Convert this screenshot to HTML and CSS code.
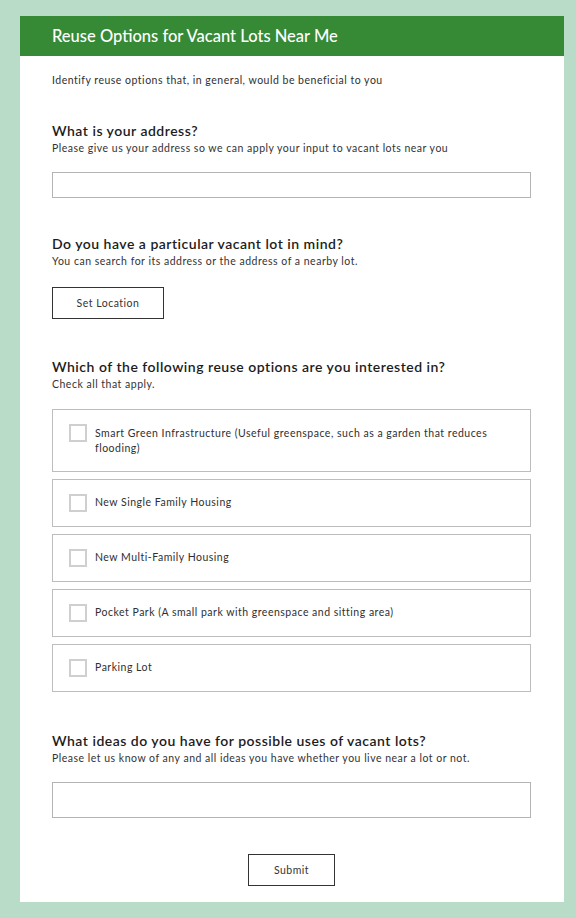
FILE: index.html
```html
<!DOCTYPE html>
<html lang="en">
<head>
<meta charset="utf-8">
<title>Reuse Options for Vacant Lots Near Me</title>
<link rel="stylesheet" href="styles.css">
</head>
<body>
<div class="card">
  <header class="card-header">
    <h1 class="title">Reuse Options for Vacant Lots Near Me</h1>
  </header>
  <form class="card-body">
    <p class="intro">Identify reuse options that, in general, would be beneficial to you</p>

    <section class="question q-address">
      <h2 class="q-title">What is your address?</h2>
      <p class="q-hint">Please give us your address so we can apply your input to vacant lots near you</p>
      <input class="text-input" type="text">
    </section>

    <section class="question q-lot">
      <h2 class="q-title">Do you have a particular vacant lot in mind?</h2>
      <p class="q-hint">You can search for its address or the address of a nearby lot.</p>
      <button class="btn btn-location" type="button">Set Location</button>
    </section>

    <section class="question q-options">
      <h2 class="q-title">Which of the following reuse options are you interested in?</h2>
      <p class="q-hint">Check all that apply.</p>
      <div class="options">
        <label class="option"><span class="box"></span><span class="option-text">Smart Green Infrastructure (Useful greenspace, such as a garden that reduces flooding)</span></label>
        <label class="option"><span class="box"></span><span class="option-text">New Single Family Housing</span></label>
        <label class="option"><span class="box"></span><span class="option-text">New Multi-Family Housing</span></label>
        <label class="option"><span class="box"></span><span class="option-text">Pocket Park (A small park with greenspace and sitting area)</span></label>
        <label class="option"><span class="box"></span><span class="option-text">Parking Lot</span></label>
      </div>
    </section>

    <section class="question q-ideas">
      <h2 class="q-title">What ideas do you have for possible uses of vacant lots?</h2>
      <p class="q-hint">Please let us know of any and all ideas you have whether you live near a lot or not.</p>
      <div class="text-area"></div>
    </section>

    <div class="submit-row">
      <button class="btn btn-submit" type="button">Submit</button>
    </div>
  </form>
</div>
</body>
</html>
```
FILE: styles.css
```css
* { box-sizing: border-box; }

html, body {
  margin: 0;
  background: #b9dcc9;
}

body {
  padding: 16px 12px 0 20px;
  height: 918px;
  font-family: Lato, "Open Sans", sans-serif;
  color: #2b2b2b;
}

.card {
  background: #ffffff;
  width: 544px;
}

.card-header {
  height: 40px;
  background: #368a36;
  display: flex;
  align-items: center;
  padding-left: 32px;
}

.title {
  margin: 0;
  font-size: 16.5px;
  font-weight: 500;
  color: #ffffff;
  line-height: 20px;
}

.card-body {
  padding: 17px 33px 16px 32px;
  display: flex;
  flex-direction: column;
}

.intro {
  margin: 0;
  font-size: 10.5px;
  line-height: 14px;
  letter-spacing: 0.5px;
  color: #2f2f2f;
}

.question { display: flex; flex-direction: column; align-items: flex-start; }
.q-address { margin-top: 35px; }
.q-lot { margin-top: 37px; }
.q-options { margin-top: 39px; }
.q-ideas { margin-top: 40px; }

.q-title {
  margin: 0;
  font-size: 14px;
  line-height: 18px;
  font-weight: 600;
  letter-spacing: 0.5px;
  color: #1c1c1c;
}

.q-hint {
  margin: 1px 0 0;
  font-size: 10.5px;
  line-height: 14px;
  letter-spacing: 0.5px;
  color: #333333;
}

.text-input {
  margin-top: 17px;
  width: 100%;
  height: 26px;
  border: 1px solid #b4b4b4;
  border-radius: 0;
  padding: 0 6px;
  background: #fff;
}

.text-area {
  margin-top: 17px;
  width: 100%;
  height: 36px;
  border: 1px solid #b4b4b4;
}

.btn {
  background: #ffffff;
  border: 1px solid #333333;
  border-radius: 0;
  height: 32px;
  font-family: Lato, "Open Sans", sans-serif;
  font-size: 10.5px;
  letter-spacing: 0.5px;
  color: #333333;
  padding: 0;
}

.btn-location {
  margin-top: 19px;
  width: 112px;
}

.options {
  margin-top: 18px;
  width: 100%;
  display: flex;
  flex-direction: column;
  gap: 7px;
}

.option {
  display: flex;
  align-items: flex-start;
  gap: 8px;
  border: 1px solid #bdbdbd;
  padding: 14px 30px 14px 16px;
  min-height: 47px;
}

.box {
  flex: none;
  width: 18px;
  height: 18px;
  border: 2px solid #cfcfcf;
  background: #fff;
}

.option-text {
  font-size: 10.5px;
  line-height: 15px;
  letter-spacing: 0.5px;
  padding-top: 1.5px;
  padding-bottom: 1px;
  color: #2f2f2f;
}

.submit-row {
  margin-top: 36px;
  display: flex;
  justify-content: center;
}

.btn-submit { width: 87px; }
```
